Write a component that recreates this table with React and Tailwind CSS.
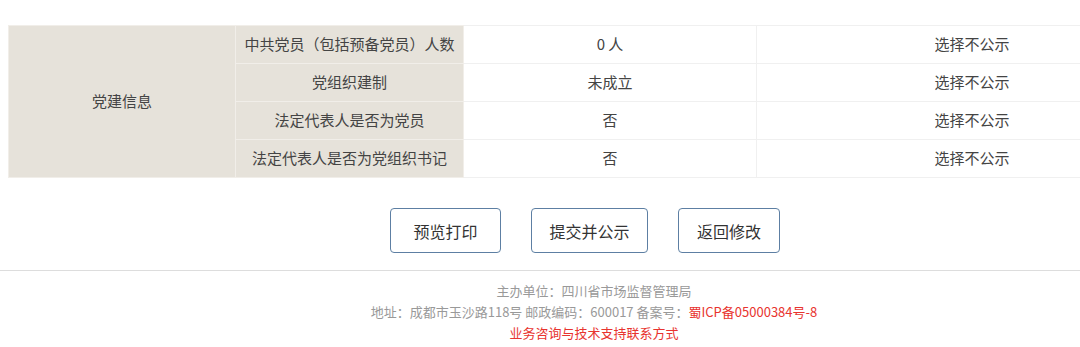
const rows = [
  { label: '中共党员（包括预备党员）人数', value: '0 人', pub: '选择不公示' },
  { label: '党组织建制', value: '未成立', pub: '选择不公示' },
  { label: '法定代表人是否为党员', value: '否', pub: '选择不公示' },
  { label: '法定代表人是否为党组织书记', value: '否', pub: '选择不公示' },
];

function Button({ children, width }) {
  return (
    <button
      className={`h-[45px] ${width} rounded-[4px] border border-[#5d7fa3] bg-white text-[16px] text-[#333]`}
    >
      {children}
    </button>
  );
}

export default function App() {
  return (
    <div className="w-[1080px] h-[347px] overflow-hidden bg-white font-['Noto_Sans_CJK_SC','Noto_Sans',sans-serif]">
      <div className="w-[1188px]">
        <div className="pt-[25px] pl-[8px]">
          <table className="w-[1180px] border-collapse text-[15px] text-[#444] table-fixed">
            <colgroup>
              <col className="w-[227px]" />
              <col className="w-[228px]" />
              <col className="w-[293px]" />
              <col />
            </colgroup>
            <tbody>
              {rows.map((r, i) => (
                <tr key={r.label} className="h-[38px]">
                  {i === 0 && (
                    <td
                      rowSpan={4}
                      className="bg-[#e6e2da] border border-[#f1eee9] text-center"
                    >
                      党建信息
                    </td>
                  )}
                  <td className="bg-[#e6e2da] border border-[#f1eee9] text-center whitespace-nowrap">
                    {r.label}
                  </td>
                  <td className="border border-[#f0f0f0] text-center">{r.value}</td>
                  <td className="border border-[#f0f0f0] text-center">{r.pub}</td>
                </tr>
              ))}
            </tbody>
          </table>
        </div>

        <div className="mt-[30px] flex justify-center gap-[30px] pr-[18px]">
          <Button width="w-[111px]">预览打印</Button>
          <Button width="w-[117px]">提交并公示</Button>
          <Button width="w-[102px]">返回修改</Button>
        </div>

        <div className="mt-[17px] border-t border-[#dddddd] pt-[9px] text-center text-[13px] leading-[21px] text-[#999]">
          <p>主办单位：四川省市场监督管理局</p>
          <p>
            地址：成都市玉沙路118号 邮政编码：600017 备案号：
            <span className="text-[#e8342f]">蜀ICP备05000384号-8</span>
          </p>
          <p className="text-[#e8342f]">业务咨询与技术支持联系方式</p>
        </div>
      </div>
    </div>
  );
}
